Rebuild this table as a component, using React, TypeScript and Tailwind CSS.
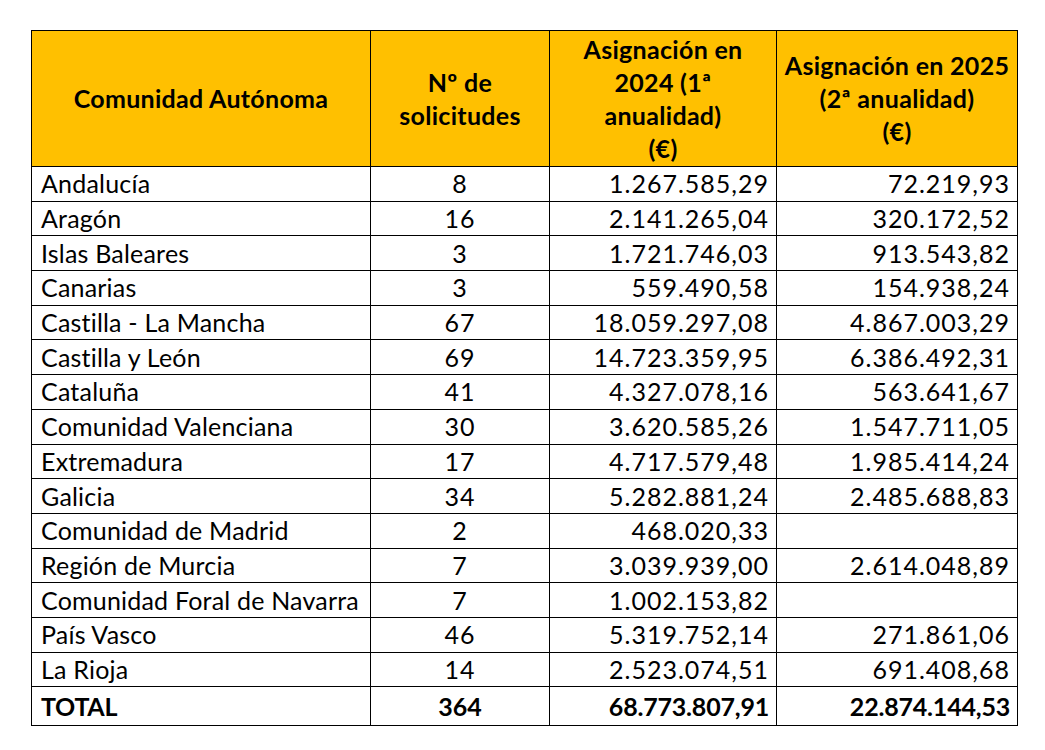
import React from "react";

const rows: [string, string, string, string][] = [
  ["Andalucía", "8", "1.267.585,29", "72.219,93"],
  ["Aragón", "16", "2.141.265,04", "320.172,52"],
  ["Islas Baleares", "3", "1.721.746,03", "913.543,82"],
  ["Canarias", "3", "559.490,58", "154.938,24"],
  ["Castilla - La Mancha", "67", "18.059.297,08", "4.867.003,29"],
  ["Castilla y León", "69", "14.723.359,95", "6.386.492,31"],
  ["Cataluña", "41", "4.327.078,16", "563.641,67"],
  ["Comunidad Valenciana", "30", "3.620.585,26", "1.547.711,05"],
  ["Extremadura", "17", "4.717.579,48", "1.985.414,24"],
  ["Galicia", "34", "5.282.881,24", "2.485.688,83"],
  ["Comunidad de Madrid", "2", "468.020,33", ""],
  ["Región de Murcia", "7", "3.039.939,00", "2.614.048,89"],
  ["Comunidad Foral de Navarra", "7", "1.002.153,82", ""],
  ["País Vasco", "46", "5.319.752,14", "271.861,06"],
  ["La Rioja", "14", "2.523.074,51", "691.408,68"],
];

export default function App() {
  return (
    <div className="w-[1045px] h-[750px] bg-white pt-[30px] pl-[31px] text-black" style={{ fontFamily: "Lato, 'Open Sans', sans-serif" }}>
      <table className="border-collapse table-fixed w-[986px] text-[25px] leading-[33px]">
        <colgroup>
          <col className="w-[339px]" />
          <col className="w-[179px]" />
          <col className="w-[227px]" />
          <col className="w-[241px]" />
        </colgroup>
        <thead>
          <tr className="h-[136px] bg-[#ffc000] font-bold text-[25px] tracking-[0.3px]">
            <th className="border border-black text-center align-middle font-bold">Comunidad Autónoma</th>
            <th className="border border-black text-center align-middle font-bold">Nº de<br />solicitudes</th>
            <th className="border border-black text-center align-middle font-bold">Asignación en<br />2024 (1ª<br />anualidad)<br />(€)</th>
            <th className="border border-black text-center align-middle font-bold whitespace-nowrap">Asignación en 2025<br />(2ª anualidad)<br />(€)</th>
          </tr>
        </thead>
        <tbody>
          {rows.map((r) => (
            <tr key={r[0]} className="h-[34.7px]">
              <td className="border border-black pl-[9px] whitespace-nowrap tracking-[0.2px]">{r[0]}</td>
              <td className="border border-black text-center tracking-[1px]">{r[1]}</td>
              <td className="border border-black text-right pr-[7px] tracking-[1px]">{r[2]}</td>
              <td className="border border-black text-right pr-[7px] tracking-[1px]">{r[3]}</td>
            </tr>
          ))}
          <tr className="h-[39px] font-bold">
            <td className="border border-black pl-[9px] tracking-[-0.3px]">TOTAL</td>
            <td className="border border-black text-center">364</td>
            <td className="border border-black text-right pr-[7px] tracking-[-0.2px]">68.773.807,91</td>
            <td className="border border-black text-right pr-[7px] tracking-[-0.2px]">22.874.144,53</td>
          </tr>
        </tbody>
      </table>
    </div>
  );
}
